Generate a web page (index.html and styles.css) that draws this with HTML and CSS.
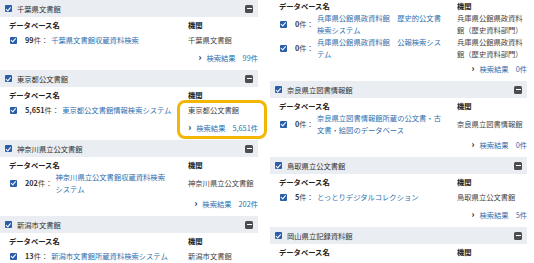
FILE: index.html
```html
<!DOCTYPE html>
<html lang="ja">
<head>
<meta charset="utf-8">
<title>検索結果</title>
<link rel="stylesheet" href="styles.css">
</head>
<body>
<div class="page">
  <div class="col">
    <section class="sec">
      <div class="sec-head"><span class="cb"></span><span class="sec-title">千葉県文書館</span><span class="toggle"></span></div>
      <div class="sec-body">
        <div class="thead"><span class="th-db">データベース名</span><span class="th-org">機関</span></div>
        <div class="row"><span class="cb"></span><span class="count"><b>99</b>件：</span><a class="link">千葉県文書館収蔵資料検索</a><span class="org">千葉県文書館</span></div>
        <div class="results"><span class="chev">›</span><a class="res-link">検索結果</a><a class="res-count">99件</a></div>
      </div>
    </section>
    <section class="sec">
      <div class="sec-head"><span class="cb"></span><span class="sec-title">東京都公文書館</span><span class="toggle"></span></div>
      <div class="sec-body">
        <div class="thead"><span class="th-db">データベース名</span><span class="th-org">機関</span></div>
        <div class="row"><span class="cb"></span><span class="count"><b>5,651</b>件：</span><a class="link">東京都公文書館情報検索システム</a><span class="org">東京都公文書館</span></div>
        <div class="results"><span class="chev">›</span><a class="res-link">検索結果</a><a class="res-count">5,651件</a></div>
      </div>
    </section>
    <section class="sec">
      <div class="sec-head"><span class="cb"></span><span class="sec-title">神奈川県立公文書館</span><span class="toggle"></span></div>
      <div class="sec-body">
        <div class="thead"><span class="th-db">データベース名</span><span class="th-org">機関</span></div>
        <div class="row"><span class="cb"></span><span class="count"><b>202</b>件：</span><a class="link">神奈川県立公文書館収蔵資料検索システム</a><span class="org">神奈川県立公文書館</span></div>
        <div class="results"><span class="chev">›</span><a class="res-link">検索結果</a><a class="res-count">202件</a></div>
      </div>
    </section>
    <section class="sec">
      <div class="sec-head"><span class="cb"></span><span class="sec-title">新潟市文書館</span><span class="toggle"></span></div>
      <div class="sec-body">
        <div class="thead"><span class="th-db">データベース名</span><span class="th-org">機関</span></div>
        <div class="row"><span class="cb"></span><span class="count"><b>13</b>件：</span><a class="link">新潟市文書館所蔵資料検索システム</a><span class="org">新潟市文書館</span></div>
      </div>
    </section>
  </div>

  <div class="col">
    <section class="sec sec-cont">
      <div class="sec-body">
        <div class="thead"><span class="th-db">データベース名</span><span class="th-org">機関</span></div>
        <div class="row"><span class="cb"></span><span class="count"><b>0</b>件：</span><a class="link">兵庫県公館県政資料館　歴史的公文書検索システム</a><span class="org">兵庫県公館県政資料館（歴史資料部門）</span></div>
        <div class="row"><span class="cb"></span><span class="count"><b>0</b>件：</span><a class="link">兵庫県公館県政資料館　公報検索システム</a><span class="org">兵庫県公館県政資料館（歴史資料部門）</span></div>
        <div class="results"><span class="chev">›</span><a class="res-link">検索結果</a><a class="res-count">0件</a></div>
      </div>
    </section>
    <section class="sec">
      <div class="sec-head"><span class="cb"></span><span class="sec-title">奈良県立図書情報館</span><span class="toggle"></span></div>
      <div class="sec-body">
        <div class="thead"><span class="th-db">データベース名</span><span class="th-org">機関</span></div>
        <div class="row"><span class="cb"></span><span class="count"><b>0</b>件：</span><a class="link">奈良県立図書情報館所蔵の公文書・古文書・絵図のデータベース</a><span class="org">奈良県立図書情報館</span></div>
        <div class="results"><span class="chev">›</span><a class="res-link">検索結果</a><a class="res-count">0件</a></div>
      </div>
    </section>
    <section class="sec">
      <div class="sec-head"><span class="cb"></span><span class="sec-title">鳥取県立公文書館</span><span class="toggle"></span></div>
      <div class="sec-body">
        <div class="thead"><span class="th-db">データベース名</span><span class="th-org">機関</span></div>
        <div class="row"><span class="cb"></span><span class="count"><b>5</b>件：</span><a class="link">とっとりデジタルコレクション</a><span class="org">鳥取県立公文書館</span></div>
        <div class="results"><span class="chev">›</span><a class="res-link">検索結果</a><a class="res-count">5件</a></div>
      </div>
    </section>
    <section class="sec">
      <div class="sec-head"><span class="cb"></span><span class="sec-title">岡山県立記録資料館</span><span class="toggle"></span></div>
      <div class="sec-body">
        <div class="thead"><span class="th-db">データベース名</span><span class="th-org">機関</span></div>
      </div>
    </section>
  </div>

  <div class="highlight"></div>
</div>
</body>
</html>
```

FILE: styles.css
```css
html, body {
  margin: 0;
  padding: 0;
  background: #fff;
}

.page {
  position: relative;
  width: 534px;
  height: 263px;
  overflow: hidden;
  display: grid;
  grid-template-columns: 258px 257px;
  column-gap: 12px;
  align-items: start;
  font-family: "Noto Sans CJK JP", "Noto Sans", sans-serif;
  font-size: 7.3px;
  line-height: 12px;
  color: #444;
}

.col {
  display: flex;
  flex-direction: column;
}

.sec-head {
  height: 17px;
  background: #eaedf1;
  display: flex;
  align-items: center;
  padding: 0 5px 0 5px;
}

.sec-title {
  flex: 1;
  margin-left: 5px;
  color: #333;
}

.cb {
  position: relative;
  flex: none;
  width: 7px;
  height: 7px;
  border-radius: 1px;
  background: #2b5ea9;
}

.cb::after {
  content: "";
  position: absolute;
  left: 2.2px;
  top: 0.6px;
  width: 1.6px;
  height: 3.6px;
  border: solid #fff;
  border-width: 0 1.1px 1.1px 0;
  transform: rotate(40deg);
}

.toggle {
  position: relative;
  flex: none;
  width: 8px;
  height: 8px;
  border-radius: 1.5px;
  background: #4d4d4f;
}

.toggle::after {
  content: "";
  position: absolute;
  left: 1.5px;
  top: 3.2px;
  width: 5px;
  height: 1.6px;
  background: #fff;
}

.sec-body {
  padding: 2px 0 6px 0;
}

.sec-cont .sec-body {
  padding-top: 0;
}

.thead {
  display: flex;
  padding-left: 9px;
  font-weight: bold;
  color: #222;
}

.th-db {
  flex: 1;
}

.th-org {
  width: 70px;
  flex: none;
}

.row {
  display: flex;
  align-items: center;
  min-height: 18px;
}

.row .cb {
  margin-left: 10px;
  margin-right: 8px;
}

.count {
  white-space: nowrap;
  margin-right: 3px;
  color: #444;
}

.count b {
  color: #333;
}

.link {
  flex: 1;
  margin-right: 16px;
  color: #2f6fae;
}

.org {
  width: 70px;
  flex: none;
  color: #444;
}

.results {
  display: flex;
  justify-content: flex-end;
  align-items: center;
  margin-top: 3px;
  color: #2f6fae;
}

.chev {
  color: #222;
  font-weight: bold;
  margin-right: 5px;
  font-size: 9px;
}

.res-count {
  margin-left: 7px;
}

.highlight {
  position: absolute;
  left: 177px;
  top: 100px;
  width: 84px;
  height: 33px;
  border: 3px solid #f3b604;
  border-radius: 8px;
}
```
